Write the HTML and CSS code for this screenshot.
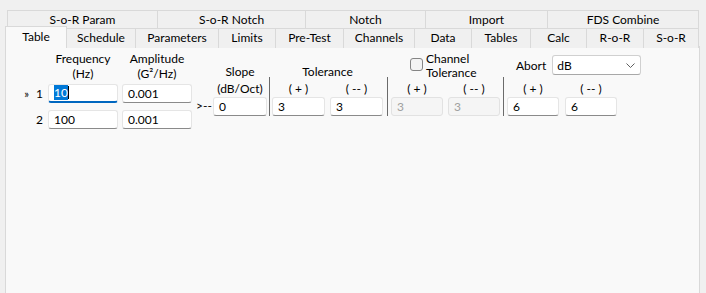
FILE: index.html
```html
<!DOCTYPE html>
<html lang="en">
<head>
    <meta charset="UTF-8">
    <title>Profile Table</title>
    <link rel="stylesheet" href="styles.css">
</head>
<body>
    <div class="tabs">
        <div class="tab-row upper">
            <div class="tab">S-o-R Param</div>
            <div class="tab">S-o-R Notch</div>
            <div class="tab">Notch</div>
            <div class="tab">Import</div>
            <div class="tab">FDS Combine</div>
        </div>
        <div class="tab-row lower">
            <div class="tab active">Table</div>
            <div class="tab">Schedule</div>
            <div class="tab">Parameters</div>
            <div class="tab">Limits</div>
            <div class="tab">Pre-Test</div>
            <div class="tab">Channels</div>
            <div class="tab">Data</div>
            <div class="tab">Tables</div>
            <div class="tab">Calc</div>
            <div class="tab">R-o-R</div>
            <div class="tab">S-o-R</div>
        </div>
    </div>

    <div class="panel">
        <div class="editor">
            <!-- breakpoints -->
            <div class="points">
                <div class="points-head">
                    <div class="row-label"></div>
                    <div class="col-title">Frequency<br>(Hz)</div>
                    <div class="col-title">Amplitude<br>(G²/Hz)</div>
                </div>
                <div class="point-row">
                    <div class="row-label"><span class="marker">»</span>1</div>
                    <div class="field focused"><span class="selected">10</span><span class="caret"></span></div>
                    <div class="field">0.001</div>
                </div>
                <div class="point-row">
                    <div class="row-label">2</div>
                    <div class="field">100</div>
                    <div class="field">0.001</div>
                </div>
            </div>

            <div class="link">&gt;--</div>

            <div class="group slope">
                <div class="group-head"><span class="title">Slope</span></div>
                <div class="sub">(dB/Oct)</div>
                <div class="field">0</div>
            </div>

            <div class="sep sep-1"></div>

            <div class="group pair tol">
                <div class="group-head"><span class="title">Tolerance</span></div>
                <div class="sub">( + )</div>
                <div class="sub">( -- )</div>
                <div class="field">3</div>
                <div class="field">3</div>
            </div>

            <div class="sep sep-2"></div>

            <div class="group pair chan">
                <div class="group-head chan-head">
                    <span class="check"></span>
                    <span class="check-label">Channel<br>Tolerance</span>
                </div>
                <div class="sub">( + )</div>
                <div class="sub">( -- )</div>
                <div class="field disabled">3</div>
                <div class="field disabled">3</div>
            </div>

            <div class="sep sep-3"></div>

            <div class="group pair abort">
                <div class="group-head abort-head">
                    <span class="title">Abort</span>
                    <div class="combo">
                        <span>dB</span>
                        <svg width="9" height="5" viewBox="0 0 9 5"><polyline points="0.5,0.5 4.5,4.5 8.5,0.5" fill="none" stroke="#5f5f5f" stroke-width="1"/></svg>
                    </div>
                </div>
                <div class="sub">( + )</div>
                <div class="sub">( -- )</div>
                <div class="field">6</div>
                <div class="field">6</div>
            </div>
        </div>
    </div>
</body>
</html>
```

FILE: styles.css
```css
body {
    margin: 0;
    height: 293px;
    overflow: hidden;
    background: #f0f0f0;
    font-family: Lato, 'Segoe UI', sans-serif;
    font-size: 12px;
    color: #000;
}

/* tab strip */
.tabs {
    padding-top: 10px;
}
.tab-row {
    display: grid;
    height: 18px;
}
.tab-row.upper {
    margin-left: 7px;
    grid-template-columns: 150px 148px 120px 122px 151px;
}
.tab-row.lower {
    margin-left: 5px;
    grid-template-columns: 61px 69px 83px 57px 68px 71px 57px 59px 56px 57px 55px;
}
.tab {
    margin-right: -1px;
    border: 1px solid #d9d9d9;
    border-bottom: none;
    background: #f0f0f0;
    text-align: center;
    line-height: 17px;
    white-space: nowrap;
}
.tab.active {
    margin-top: -2px;
    height: 21px;
    line-height: 19px;
    background: #f9f9f9;
    z-index: 1;
}

/* page */
.panel {
    margin-left: 5px;
    width: 693px;
    height: 246px;
    border: 1px solid #d9d9d9;
    background: #f9f9f9;
}
.editor {
    display: flex;
    align-items: flex-start;
    padding-top: 4px;
}

.points {
    display: flex;
    flex-direction: column;
}
.points-head {
    display: flex;
    gap: 4px;
    height: 30px;
    margin-bottom: 3px;
}
.col-title {
    width: 70px;
    text-align: center;
    line-height: 15px;
}
.point-row {
    display: flex;
    align-items: center;
    gap: 4px;
    margin-bottom: 7px;
}
.row-label {
    width: 37px;
    padding-right: 1px;
    text-align: right;
}
.marker {
    font-size: 11px;
    margin-right: 7px;
}
.points .field {
    width: 70px;
}

.field {
    box-sizing: border-box;
    height: 19px;
    padding-left: 5px;
    background: #fff;
    border: 1px solid #e5e5e5;
    border-bottom-color: #8a8a8a;
    border-radius: 3px;
    line-height: 17px;
    white-space: nowrap;
}
.field.focused {
    border-bottom: 2px solid #0067c0;
    line-height: 16px;
}
.selected {
    background: #0078d7;
    color: #fff;
}
.caret {
    display: inline-block;
    width: 1px;
    height: 13px;
    background: #000;
    vertical-align: -2px;
}
.field.disabled {
    background: #f5f5f5;
    border-color: #e2e2e2;
    color: #a0a0a0;
}

.link {
    width: 13px;
    margin: 47px 4px 0;
    line-height: 15px;
    white-space: nowrap;
}

/* right side groups */
.group {
    display: grid;
    grid-template-rows: 29px 17px 19px;
}
.group-head {
    grid-column: 1 / -1;
    display: flex;
    align-items: flex-end;
    justify-content: center;
}
.title {
    line-height: 17px;
}
.sub {
    text-align: center;
    line-height: 17px;
    white-space: nowrap;
}
.slope {
    grid-template-columns: 54px;
}
.tol {
    grid-template-columns: 53px 53px;
    column-gap: 5px;
}
.chan {
    grid-template-columns: 52px 52px;
    column-gap: 5px;
}
.abort {
    grid-template-columns: 52px 52px;
    column-gap: 6px;
}

.sep {
    width: 1px;
    height: 39px;
    margin-top: 26px;
    background: #6b6b6b;
}
.sep-1 { margin-left: 2px; margin-right: 2px; }
.sep-2 { margin-left: 4px; margin-right: 3px; }
.sep-3 { margin-left: 3px; margin-right: 3px; }

.chan-head {
    justify-content: flex-start;
    align-items: center;
    padding-left: 19px;
    gap: 3px;
}
.check {
    box-sizing: border-box;
    width: 13px;
    height: 13px;
    margin-bottom: 3px;
    border: 1px solid #858585;
    border-radius: 3px;
    background: #f3f3f3;
}
.check-label {
    line-height: 14px;
    white-space: nowrap;
}

.abort-head {
    justify-content: flex-start;
    align-items: center;
    gap: 6px;
    padding-left: 9px;
    padding-bottom: 1px;
}
.combo {
    flex-shrink: 0;
    box-sizing: border-box;
    width: 89px;
    height: 20px;
    display: flex;
    align-items: center;
    justify-content: space-between;
    padding: 0 5px 0 4px;
    background: #fff;
    border: 1px solid #d0d0d0;
    border-bottom-color: #a8a8a8;
    border-radius: 3px;
}
```
